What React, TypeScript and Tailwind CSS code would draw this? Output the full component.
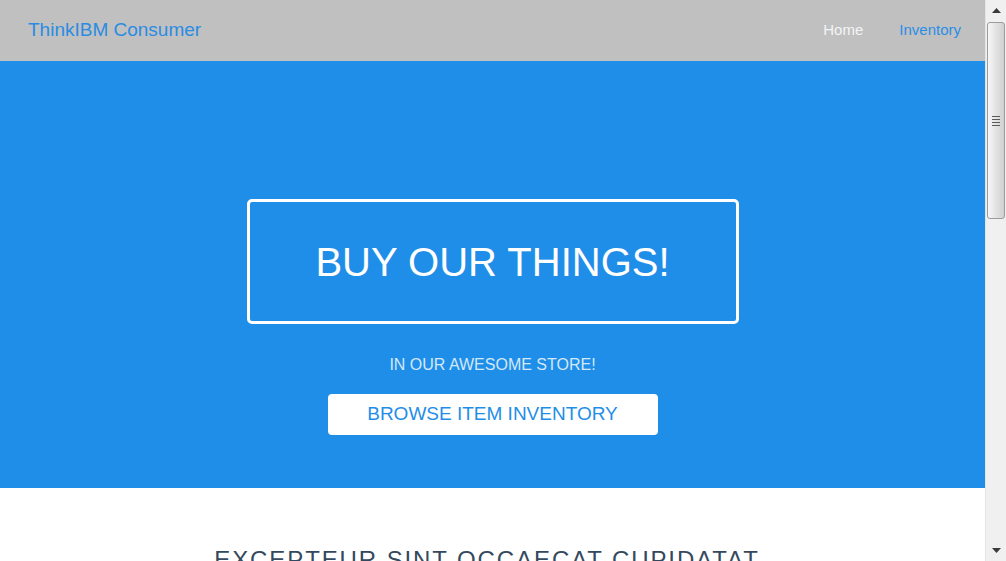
const features = [
  {
    title: "Quality Goods",
    desc: "Duis aute irure dolor in reprehenderit in voluptate velit esse cillum dolore eu fugiat nulla pariatur.",
  },
  {
    title: "Fast Shipping",
    desc: "Ut enim ad minim veniam, quis nostrud exercitation ullamco laboris nisi ut aliquip ex ea commodo.",
  },
  {
    title: "Happy Customers",
    desc: "Lorem ipsum dolor sit amet, consectetur adipiscing elit, sed do eiusmod tempor incididunt ut labore.",
  },
];

function Navbar() {
  return (
    <nav className="flex h-[61px] shrink-0 items-center justify-between bg-[#c0c0c0] pl-[28px] pr-[24px]">
      <a href="#" className="text-[19px] text-[#2a8ce2]">
        ThinkIBM Consumer
      </a>
      <div className="flex items-center gap-[36px] text-[15px]">
        <a href="#" className="text-[#f4f4f4]">
          Home
        </a>
        <a href="#" className="text-[#2a8ee6]">
          Inventory
        </a>
      </div>
    </nav>
  );
}

function Hero() {
  return (
    <header className="flex h-[427px] shrink-0 flex-col items-center bg-[#1f8ee8] pt-[138px]">
      <div className="flex h-[125px] w-[492px] items-center justify-center rounded-[5px] border-[3px] border-white">
        <h1 className="text-[40px] leading-none text-white">BUY OUR THINGS!</h1>
      </div>
      <p className="mt-[31px] text-[16px] leading-[20px] text-[#d3e8f9]">IN OUR AWESOME STORE!</p>
      <a
        href="#"
        className="mt-[19px] flex h-[41px] w-[330px] items-center justify-center rounded-[4px] bg-white text-[19px] text-[#1f8ee8]"
      >
        BROWSE ITEM INVENTORY
      </a>
    </header>
  );
}

function About() {
  return (
    <section className="min-h-[889px] shrink-0 bg-white px-[60px] pt-[60px] text-center">
      <h2 className="pr-[11px] text-[24px] leading-none tracking-[1.9px] text-[#34495e]">
        EXCEPTEUR SINT OCCAECAT CUPIDATAT
      </h2>
      <p className="mx-auto mt-6 max-w-[620px] text-[15px] leading-6 text-[#6b7785]">
        Non proident, sunt in culpa qui officia deserunt mollit anim id est laborum. Sed ut perspiciatis unde
        omnis iste natus error sit voluptatem accusantium doloremque laudantium.
      </p>
      <div className="mt-16 grid grid-cols-3 gap-8">
        {features.map((f) => (
          <div key={f.title} className="rounded-[4px] border border-[#e3e6ea] p-8">
            <h3 className="text-[18px] text-[#1f8ee8]">{f.title}</h3>
            <p className="mt-3 text-[14px] leading-6 text-[#6b7785]">{f.desc}</p>
          </div>
        ))}
      </div>
    </section>
  );
}

// classic window scrollbar, drawn since the page itself is clipped to the viewport
function Scrollbar() {
  return (
    <div className="flex h-screen w-[21px] shrink-0 flex-col border-l border-[#e4e4e4] bg-[#f0f0f0]">
      <div className="flex h-[21px] items-center justify-center">
        <svg width="9" height="5" viewBox="0 0 9 5">
          <path d="M4.5 0 L9 5 L0 5 Z" fill="#3a3a3a" />
        </svg>
      </div>
      <div className="flex flex-1 flex-col px-px pt-px">
        <div className="flex h-[197px] items-center justify-center rounded-[3px] border border-[#9c9c9c] bg-[linear-gradient(to_right,#f7f7f7,#e4e4e4_45%,#d0d0d0)]">
          <div className="flex w-[8px] flex-col gap-[2px]">
            <span className="h-px bg-[#5a5a5a]" />
            <span className="h-px bg-[#5a5a5a]" />
            <span className="h-px bg-[#5a5a5a]" />
            <span className="h-px bg-[#5a5a5a]" />
          </div>
        </div>
      </div>
      <div className="flex h-[21px] items-center justify-center">
        <svg width="9" height="5" viewBox="0 0 9 5">
          <path d="M0 0 L9 0 L4.5 5 Z" fill="#3a3a3a" />
        </svg>
      </div>
    </div>
  );
}

export default function App() {
  return (
    <div className="flex h-screen overflow-hidden font-['Liberation_Sans',Arial,sans-serif]">
      <div className="flex min-w-0 flex-1 flex-col">
        <Navbar />
        <Hero />
        <About />
      </div>
      <Scrollbar />
    </div>
  );
}
